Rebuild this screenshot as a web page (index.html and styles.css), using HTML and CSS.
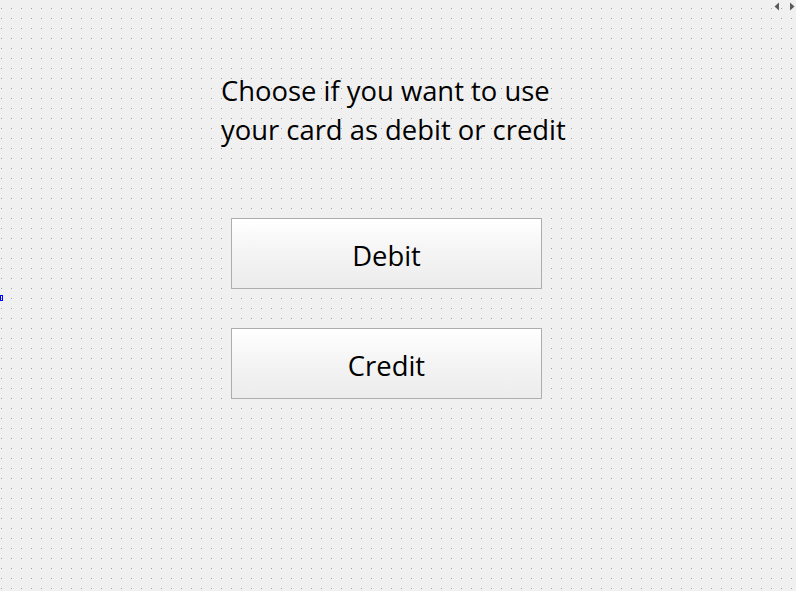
FILE: index.html
```html
<!DOCTYPE html>
<html>
<head>
<meta charset="utf-8">
<link rel="stylesheet" href="styles.css">
</head>
<body>
<div class="canvas">
  <div class="form">
    <div class="prompt">Choose if you want to use<br>your card as debit or credit</div>
    <div class="buttons">
      <button class="btn">Debit</button>
      <button class="btn">Credit</button>
    </div>
  </div>
  <span class="marker"></span>
  <div class="scroll-arrows">
    <svg width="6" height="9" viewBox="0 0 6 9"><path d="M5 0.5 L0.5 4.5 L5 8.5 Z" fill="#5a5a5a"/></svg>
    <svg width="6" height="9" viewBox="0 0 6 9"><path d="M1 0.5 L5.5 4.5 L1 8.5 Z" fill="#5a5a5a"/></svg>
  </div>
</div>
</body>
</html>
```
FILE: styles.css
```css
html, body {
  margin: 0;
  padding: 0;
}
.canvas {
  position: relative;
  width: 796px;
  height: 591px;
  overflow: hidden;
  background-color: #f0f0f0;
  background-image:
    linear-gradient(to bottom, transparent 1px, #f0f0f0 1px),
    linear-gradient(to right, #a0a0a0 1px, #f0f0f0 1px);
  background-size: 10px 10px;
  background-position: 1px 8px;
  font-family: "Open Sans", "Noto Sans", sans-serif;
  color: #000;
}
.form {
  display: flex;
  flex-direction: column;
  padding-top: 71px;
  padding-left: 221px;
}
.prompt {
  font-size: 27.4px;
  line-height: 39px;
}
.buttons {
  display: flex;
  flex-direction: column;
  gap: 39px;
  margin-top: 69px;
  margin-left: 10px;
}
.btn {
  width: 311px;
  height: 71px;
  box-sizing: border-box;
  border: 1px solid #adadad;
  border-radius: 0;
  background: linear-gradient(to bottom, #ffffff 0%, #f4f4f4 50%, #ececec 100%);
  font-family: "Open Sans", "Noto Sans", sans-serif;
  font-size: 27.4px;
  color: #000;
  padding: 4px 0 0 0;
  margin: 0;
}
.marker {
  position: absolute;
  left: 0;
  top: 295px;
  width: 3px;
  height: 6px;
  box-sizing: border-box;
  border: 1px solid #0000ff;
}
.scroll-arrows {
  position: absolute;
  top: 2px;
  right: 1px;
  display: flex;
  gap: 9px;
}
.scroll-arrows svg {
  display: block;
}
```
